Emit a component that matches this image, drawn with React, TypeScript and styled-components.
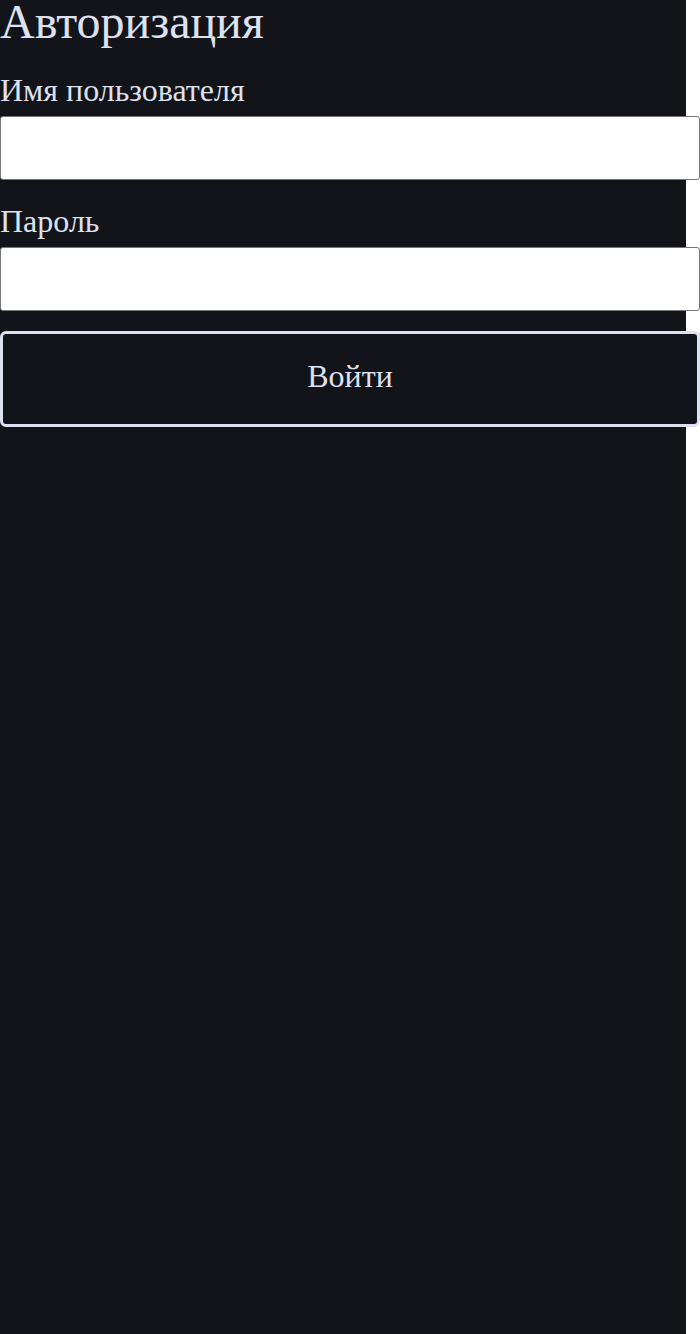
import React from "react";
import styled, { createGlobalStyle } from "styled-components";

const Global = createGlobalStyle`
  html, body { margin: 0; padding: 0; background: #ffffff; }
`;

const Page = styled.main`
  width: 686px;
  min-height: 1334px;
  background: #131419;
  color: #dde1f0;
  font-family: "Liberation Serif", "Times New Roman", serif;
  display: flex;
  flex-direction: column;
`;

const Title = styled.h1`
  margin: 0 0 28px;
  font-size: 48px;
  font-weight: 400;
  line-height: 44px;
`;

const Form = styled.form`
  display: flex;
  flex-direction: column;
`;

const Field = styled.div<{ $after: number }>`
  display: flex;
  flex-direction: column;
  margin-bottom: ${(p) => p.$after}px;
`;

const Label = styled.label`
  font-size: 32px;
  line-height: 36px;
  margin-bottom: 8px;
`;

const Input = styled.input`
  box-sizing: content-box;
  width: 100%;
  height: 50px;
  padding: 6px;
  margin: 0;
  border: 1px solid #767676;
  border-radius: 3px;
  background: #ffffff;
  font-family: inherit;
  font-size: 28px;
  display: block;
`;

const Button = styled.button`
  width: 700px;
  height: 96px;
  box-sizing: border-box;
  padding: 0 0 5px;
  border: 3px solid #dde1f0;
  border-radius: 6px;
  background: #131419;
  color: #dde1f0;
  font-family: "Liberation Serif", "Times New Roman", serif;
  font-size: 32px;
`;

export default function App() {
  return (
    <>
      <Global />
      <Page>
        <Title>Авторизация</Title>
        <Form onSubmit={(e) => e.preventDefault()}>
          <Field $after={23}>
            <Label htmlFor="username">Имя пользователя</Label>
            <Input id="username" type="text" />
          </Field>
          <Field $after={20}>
            <Label htmlFor="password">Пароль</Label>
            <Input id="password" type="password" />
          </Field>
          <Button type="submit">Войти</Button>
        </Form>
      </Page>
    </>
  );
}
